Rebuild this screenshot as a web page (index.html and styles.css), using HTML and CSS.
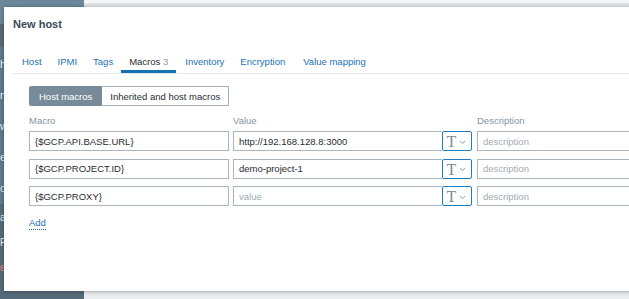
FILE: index.html
```html
<!DOCTYPE html>
<html>
<head>
<meta charset="utf-8">
<link rel="stylesheet" href="styles.css">
</head>
<body>
<div class="page">
  <aside class="sidebar">
    <div class="side-top"></div>
    <div class="side-dark"></div>
    <ul class="side-menu">
      <li>h</li>
      <li>ni</li>
      <li>w</li>
      <li>e</li>
      <li>o</li>
    </ul>
    <div class="side-bottom">
      <span class="sb1">a</span>
      <span class="sb2">P</span>
      <span class="sb3">e</span>
    </div>
  </aside>
  <main class="main">
    <div class="topbar"></div>
  </main>
</div>

<div class="modal">
  <h1 class="title">New host</h1>
  <nav class="tabs">
    <a class="tab">Host</a>
    <a class="tab">IPMI</a>
    <a class="tab">Tags</a>
    <a class="tab active">Macros <span class="count">3</span></a>
    <a class="tab">Inventory</a>
    <a class="tab">Encryption</a>
    <a class="tab">Value mapping</a>
  </nav>
  <section class="panel">
    <div class="segmented">
      <button class="seg on">Host macros</button>
      <button class="seg">Inherited and host macros</button>
    </div>
    <div class="grid">
      <div class="head">Macro</div>
      <div class="head">Value</div>
      <div class="head">Description</div>

      <input class="field" value="{$GCP.API.BASE.URL}">
      <div class="valwrap"><input class="field val" value="http://192.168.128.8:3000"><span class="tbtn"><span class="tglyph">T</span><svg class="chev" width="7" height="5" viewBox="0 0 7 5"><path d="M1 1.2 L3.5 3.6 L6 1.2" fill="none" stroke="#8a98a2" stroke-width="1"/></svg></span></div>
      <input class="field" placeholder="description">

      <input class="field" value="{$GCP.PROJECT.ID}">
      <div class="valwrap"><input class="field val" value="demo-project-1"><span class="tbtn"><span class="tglyph">T</span><svg class="chev" width="7" height="5" viewBox="0 0 7 5"><path d="M1 1.2 L3.5 3.6 L6 1.2" fill="none" stroke="#8a98a2" stroke-width="1"/></svg></span></div>
      <input class="field" placeholder="description">

      <input class="field" value="{$GCP.PROXY}">
      <div class="valwrap"><input class="field val" placeholder="value"><span class="tbtn"><span class="tglyph">T</span><svg class="chev" width="7" height="5" viewBox="0 0 7 5"><path d="M1 1.2 L3.5 3.6 L6 1.2" fill="none" stroke="#8a98a2" stroke-width="1"/></svg></span></div>
      <input class="field" placeholder="description">
    </div>
    <a class="add">Add</a>
  </section>
</div>
</body>
</html>
```
FILE: styles.css
```css
* { box-sizing: border-box; }
html, body {
  margin: 0;
  padding: 0;
  width: 629px;
  height: 299px;
  overflow: hidden;
  font-family: "Liberation Sans", Arial, sans-serif;
}
.page {
  display: flex;
  width: 629px;
  height: 299px;
  background: #ebeef0;
}
.sidebar {
  width: 84px;
  flex: none;
  background: #5f7a8c;
  display: flex;
  flex-direction: column;
  color: #e6edf2;
  font-size: 11px;
}
.side-top {
  height: 24px;
  background: #6a879b;
}
.side-dark {
  height: 22px;
  background: #5b6872;
}
.side-menu {
  list-style: none;
  margin: 0;
  padding: 12px 0 0 0;
  display: flex;
  flex-direction: column;
  gap: 19px;
  flex: none;
  height: 158px;
}
.side-menu li {
  line-height: 12px;
  white-space: nowrap;
}
.side-bottom {
  flex: 1;
  background: #566b79;
  display: flex;
  flex-direction: column;
  gap: 14px;
  padding-top: 8px;
  font-size: 10px;
}
.sb3 { color: #e88; }
.main {
  flex: 1;
  display: flex;
  flex-direction: column;
}
.topbar {
  height: 7px;
  background: #f4f5f6;
  border-bottom: 4px solid #dde1e4;
}

.modal {
  position: absolute;
  left: 4px;
  top: 7px;
  width: 700px;
  height: 284px;
  background: #ffffff;
  box-shadow: 0 0 3px rgba(0,0,0,0.25), 0 2px 4px rgba(0,0,0,0.12);
  padding: 10px 0 0 9px;
}
.title {
  margin: 0;
  font-size: 11px;
  line-height: 14px;
  font-weight: bold;
  color: #3c4a55;
}
.tabs {
  margin-top: 21px;
  display: flex;
  padding-left: 1px;
  border-bottom: 1px solid #e4e7ea;
}
.tab {
  font-size: 9.5px;
  line-height: 12px;
  padding: 4px 8px 2px;
  border-bottom: 3px solid transparent;
  color: #1b72b3;
  white-space: nowrap;
}
.tab:nth-child(5) { padding-left: 9px; }
.tab:last-child { padding-left: 10px; }
.tab.active {
  color: #1f2c33;
  border-bottom-color: #1371b5;
}
.count { color: #8a97a1; }

.panel {
  padding: 12px 0 0 16px;
}
.segmented {
  display: flex;
  height: 20px;
}
.seg {
  font-family: "Liberation Sans", Arial, sans-serif;
  font-size: 9.5px;
  height: 20px;
  padding: 0 8px;
  margin: 0;
  border: 1px solid #a5b0b8;
  background: #ffffff;
  color: #1f2c33;
  white-space: nowrap;
}
.seg + .seg { border-left: none; }
.seg.on {
  background: #778b99;
  border-color: #778b99;
  color: #ffffff;
  border-radius: 2px 0 0 2px;
  padding: 0 9px;
}
.grid {
  margin-top: 9px;
  display: grid;
  grid-template-columns: 200px 239px 200px;
  column-gap: 4px;
  row-gap: 7.5px;
}
.grid .head:nth-child(3) { margin-left: 1px; }
.grid > input:nth-child(3n) { margin-left: 1px; }
.head {
  font-size: 9.5px;
  line-height: 12px;
  color: #8593a0;
  margin-bottom: -3.5px;
}
.field {
  height: 20px;
  border: 1px solid #aab6be;
  border-radius: 0;
  padding: 0 5px;
  font-family: "Liberation Sans", Arial, sans-serif;
  font-size: 9.5px;
  color: #1f2c33;
  background: #fff;
  outline: none;
  width: 100%;
  margin: 0;
}
.field::placeholder { color: #a2abb2; }
.valwrap {
  display: flex;
  height: 20px;
}
.field.val {
  flex: 1;
  width: auto;
  min-width: 0;
  border-right: none;
}
.tbtn {
  width: 30px;
  flex: none;
  height: 20px;
  border: 1px solid #1f7ec2;
  border-radius: 2px;
  display: flex;
  align-items: center;
  justify-content: center;
  gap: 3px;
  padding-right: 1px;
}
.tglyph {
  font-family: "Liberation Serif", "Times New Roman", serif;
  font-size: 16px;
  line-height: 15px;
  color: #7b8b96;
  margin-top: 1px;
}
.chev { display: block; margin-top: 2px; }
.add {
  display: inline-block;
  margin-top: 11px;
  font-size: 9.5px;
  line-height: 12px;
  color: #1b72b3;
  border-bottom: 1px dotted #1b72b3;
}
```
